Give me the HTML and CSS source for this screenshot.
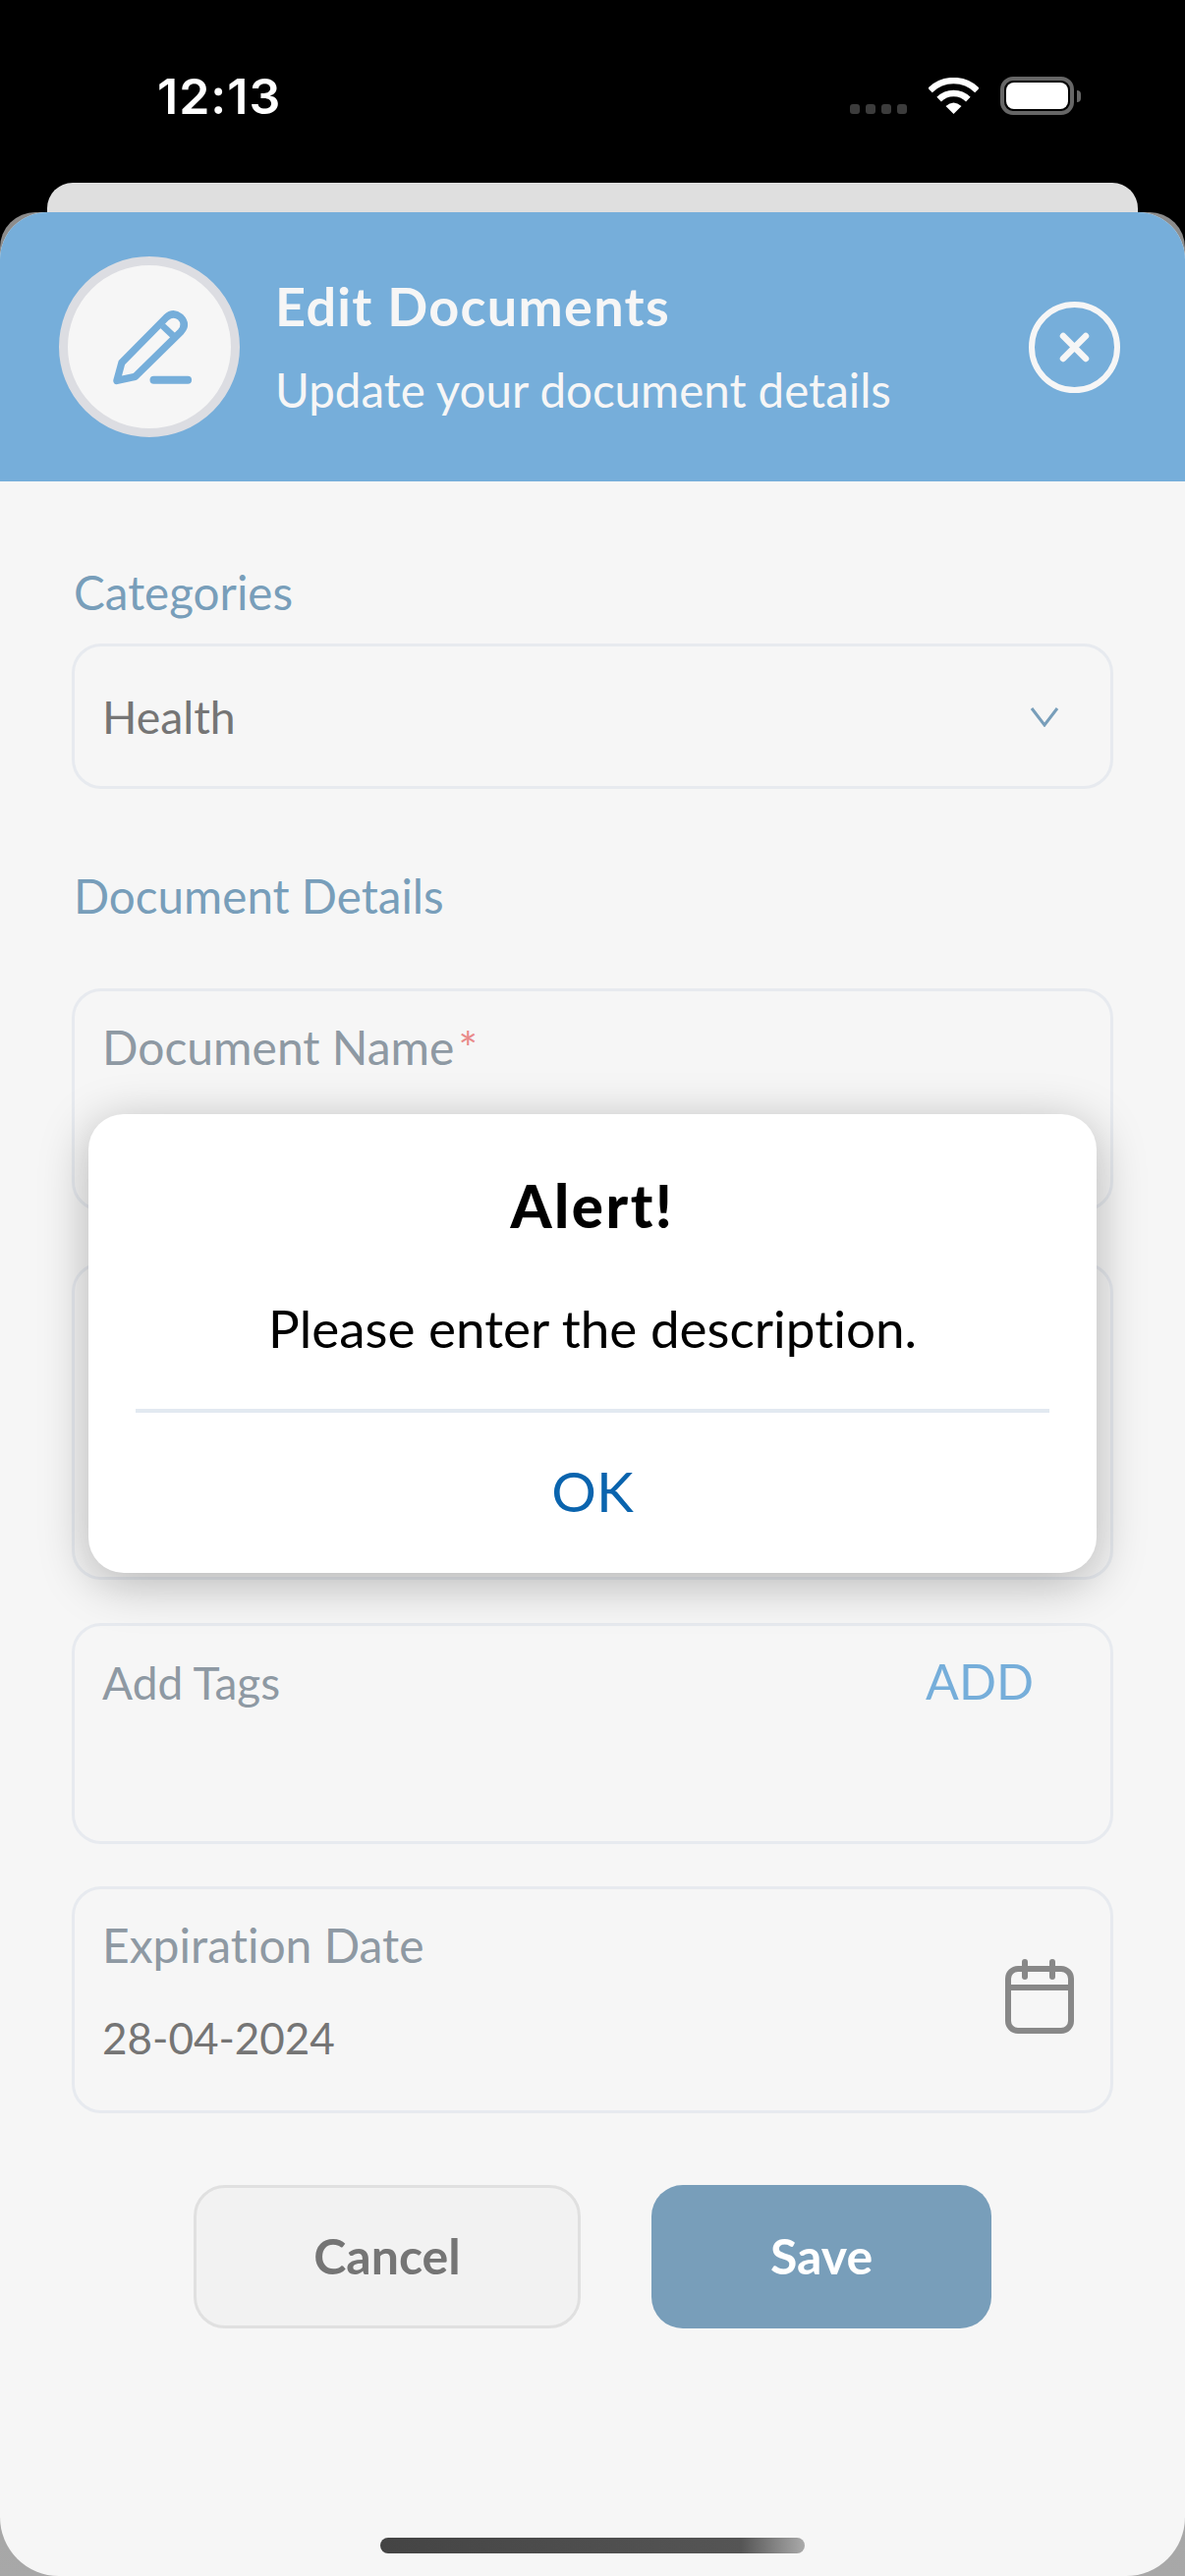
FILE: index.html
```html
<!DOCTYPE html>
<html lang="en">
<head>
<meta charset="utf-8">
<title>Edit Documents</title>
<link rel="stylesheet" href="styles.css">
</head>
<body>
<div class="status">
  <span class="time">12:13</span>
  <div class="status-icons">
    <div class="dots"><i></i><i></i><i></i><i></i></div>
    <svg class="wifi" viewBox="0 0 51 37" aria-hidden="true">
      <path d="M1.5 13A34 34 0 0 1 49.5 13M10.650 22.150A21 21 0 0 1 40.350 22.150" fill="none" stroke="#fff" stroke-width="6.500"/>
      <path d="M25.500 37L17.500 29Q25.500 22 33.500 29Z" fill="#fff"/>
    </svg>
    <div class="battery"><div class="battery-fill"></div></div>
    <div class="battery-nub"></div>
  </div>
</div>
<div class="back-sheet"></div>
<div class="shell">
  <main class="sheet">
    <header class="head">
      <div class="avatar">
        <svg viewBox="117 90 496 496" width="165" height="165" aria-hidden="true">
          <path d="M264 440L279 385L415 247Q436 228 458 245Q480 268 460 290L320 428Z" fill="none" stroke="#76aeda" stroke-width="22" stroke-linejoin="round"/>
          <path d="M404 272L442 308" fill="none" stroke="#76aeda" stroke-width="20"/>
          <path d="M377 438H481" fill="none" stroke="#76aeda" stroke-width="24" stroke-linecap="round"/>
        </svg>
      </div>
      <div class="head-text">
        <div class="head-title">Edit Documents</div>
        <div class="head-sub">Update your document details</div>
      </div>
      <svg class="close" viewBox="0 0 93 93" aria-hidden="true">
        <circle cx="46.500" cy="46.500" r="43.500" fill="none" stroke="#f6f6f6" stroke-width="6"/>
        <path d="M35 35L58 58M58 35L35 58" fill="none" stroke="#f6f6f6" stroke-width="6.500" stroke-linecap="round"/>
      </svg>
    </header>
    <div class="form">
      <div class="section section-cat">Categories</div>
      <div class="field field-select">
        <span class="value">Health</span>
        <svg class="chevron" viewBox="0 0 30 21" aria-hidden="true"><path d="M2 2L15 19L28 2" fill="none" stroke="#789eba" stroke-width="3"/></svg>
      </div>
      <div class="section section-doc">Document Details</div>
      <div class="field field-name"><span class="label">Document Name</span><span class="req">*</span></div>
      <div class="field field-desc"></div>
      <div class="field field-tags">
        <span class="label label-tags">Add Tags</span>
        <span class="add">ADD</span>
      </div>
      <div class="field field-date">
        <div class="date-text">
          <div class="label">Expiration Date</div>
          <div class="value date-value">28-04-2024</div>
        </div>
        <svg class="calendar" viewBox="0 0 70 76" aria-hidden="true">
          <rect x="3" y="10" width="64" height="63" rx="10" fill="none" stroke="#888" stroke-width="6"/>
          <path d="M3 29H67" fill="none" stroke="#888" stroke-width="6"/>
          <path d="M20 3V18M48 3V18" fill="none" stroke="#888" stroke-width="6" stroke-linecap="round"/>
        </svg>
      </div>
      <div class="actions">
        <div class="btn btn-cancel">Cancel</div>
        <div class="btn btn-save">Save</div>
      </div>
    </div>
    <div class="home-bar"></div>
  </main>
  <div class="alert">
    <div class="alert-title">Alert!</div>
    <div class="alert-msg">Please enter the description.</div>
    <div class="alert-rule"></div>
    <div class="alert-ok">OK</div>
  </div>
</div>
</body>
</html>
```
FILE: styles.css
```css
* { box-sizing: border-box; }
html, body { margin: 0; padding: 0; }
body {
  width: 1206px;
  height: 2622px;
  overflow: hidden;
  background: #000;
  font-family: "Lato", "Open Sans", sans-serif;
  font-variant-ligatures: none;
  display: flex;
  flex-direction: column;
}
.status {
  height: 186px;
  flex: none;
  display: flex;
  justify-content: space-between;
  padding: 68px 106px 0 160px;
}
.time {
  font-family: "Inter", sans-serif;
  font-weight: 600;
  font-size: 50px;
  line-height: 60px;
  letter-spacing: 1px;
  color: #fff;
}
.status-icons { display: flex; align-items: flex-start; padding-top: 10px; }
.dots { display: flex; gap: 6px; margin-top: 28px; margin-right: 22px; }
.dots i { width: 10px; height: 10px; border-radius: 3px; background: #3c3c3c; display: block; }
.wifi { width: 51px; height: 37px; margin-top: 1px; margin-right: 22px; }
.battery {
  width: 75px; height: 39px;
  border: 4px solid #666;
  border-radius: 13px;
  padding: 2px;
}
.battery-fill { width: 100%; height: 100%; background: #fff; border-radius: 8px; }
.battery-nub { width: 4px; height: 12px; margin: 14px 0 0 3px; background: #666; border-radius: 0 6px 6px 0; }
.back-sheet {
  height: 30px;
  flex: none;
  margin: 0 48px;
  background: #dfdfdf;
  border-radius: 26px 26px 0 0;
}
.shell {
  flex: 1;
  position: relative;
  border-radius: 36px 36px 0 0;
  background: linear-gradient(#8c8c8c, #8c8c8c 50%, #a8a8a8);
}
.sheet {
  height: 2406px;
  background: #f6f6f6;
  border-radius: 48px 48px 60px 60px;
  overflow: hidden;
  position: relative;
  display: flex;
  flex-direction: column;
}
.head {
  height: 274px;
  flex: none;
  background: #76aeda;
  display: flex;
  align-items: center;
  padding: 0 66px 0 60px;
}
.avatar {
  width: 184px; height: 184px;
  flex: none;
  border: 9px solid #dcdde2;
  border-radius: 50%;
  background: #f6f6f6;
  display: flex;
  align-items: center;
  justify-content: center;
}
.head-text { flex: 1; padding-left: 36px; color: #f6f6f6; margin-top: 2px; }
.head-title { font-size: 54px; line-height: 62px; font-weight: 700; letter-spacing: 1.300px; }
.head-sub { font-size: 47.500px; line-height: 60px; margin-top: 24px; }
.close { width: 93px; height: 93px; flex: none; }
.form { padding: 0 73px; flex: 1; }
.section { font-size: 47.600px; line-height: 56px; color: #789eba; padding-left: 2px; }
.section-cat { margin-top: 85px; }
.section-doc { margin-top: 81px; }
.field {
  border: 3px solid #e7eaef;
  border-radius: 30px;
  padding: 0 28px;
}
.field-select {
  margin-top: 24px;
  height: 148px;
  display: flex;
  align-items: center;
  justify-content: space-between;
  padding-right: 52px;
}
.value { font-size: 46.400px; line-height: 56px; color: #757575; }
.chevron { width: 30px; height: 21px; }
.label { font-size: 48px; line-height: 56px; color: #8e99a3; }
.label-tags { font-size: 46px; }
.req { font-size: 46px; line-height: 40px; color: #e98a8a; margin-left: 4px; }
.field-name { margin-top: 66px; height: 227px; padding-top: 29px; }
.field-desc { margin-top: 52px; height: 323px; }
.field-tags {
  margin-top: 44px;
  height: 225px;
  display: flex;
  justify-content: space-between;
  align-items: flex-start;
  padding-top: 30px;
  padding-right: 78px;
}
.add { font-size: 50px; line-height: 56px; color: #76aeda; margin-top: -2px; }
.field-date {
  margin-top: 43px;
  height: 231px;
  display: flex;
  justify-content: space-between;
  align-items: center;
  padding-right: 37px;
}
.date-text { align-self: flex-start; padding-top: 29px; }
.date-value { font-size: 44px; margin-top: 38px; }
.calendar { width: 70px; height: 76px; margin-top: -7px; }
.actions { display: flex; margin-top: 73px; padding-left: 124px; gap: 72px; }
.btn {
  height: 146px;
  border-radius: 32px;
  display: flex;
  align-items: center;
  justify-content: center;
  font-size: 50px;
  font-weight: 700;
  padding-bottom: 2px;
}
.btn-cancel { width: 394px; background: #f2f2f2; border: 3px solid #e0e0e0; color: #757575; }
.btn-save { width: 346px; background: #789eba; color: #fff; }
.home-bar {
  position: absolute;
  left: 387px; bottom: 23px;
  width: 432px; height: 16px;
  border-radius: 8px;
  background: linear-gradient(90deg, #444, #555 85%, #aaa);
}
.alert {
  position: absolute;
  left: 90px; top: 918px;
  width: 1026px; height: 467px;
  background: #fff;
  border-radius: 36px;
  box-shadow: 0 10px 50px rgba(0, 0, 0, 0.28);
  display: flex;
  flex-direction: column;
  align-items: center;
}
.alert-title { font-size: 60px; line-height: 64px; font-weight: 900; letter-spacing: 2.500px; color: #000; margin-top: 61px; }
.alert-msg { font-size: 53px; line-height: 60px; color: #000; margin-top: 63px; }
.alert-rule { width: 930px; height: 4px; background: #e2e9f1; margin-top: 52px; flex: none; }
.alert-ok { font-size: 57px; line-height: 64px; color: #0a64ae; margin-top: 47px; }
```
